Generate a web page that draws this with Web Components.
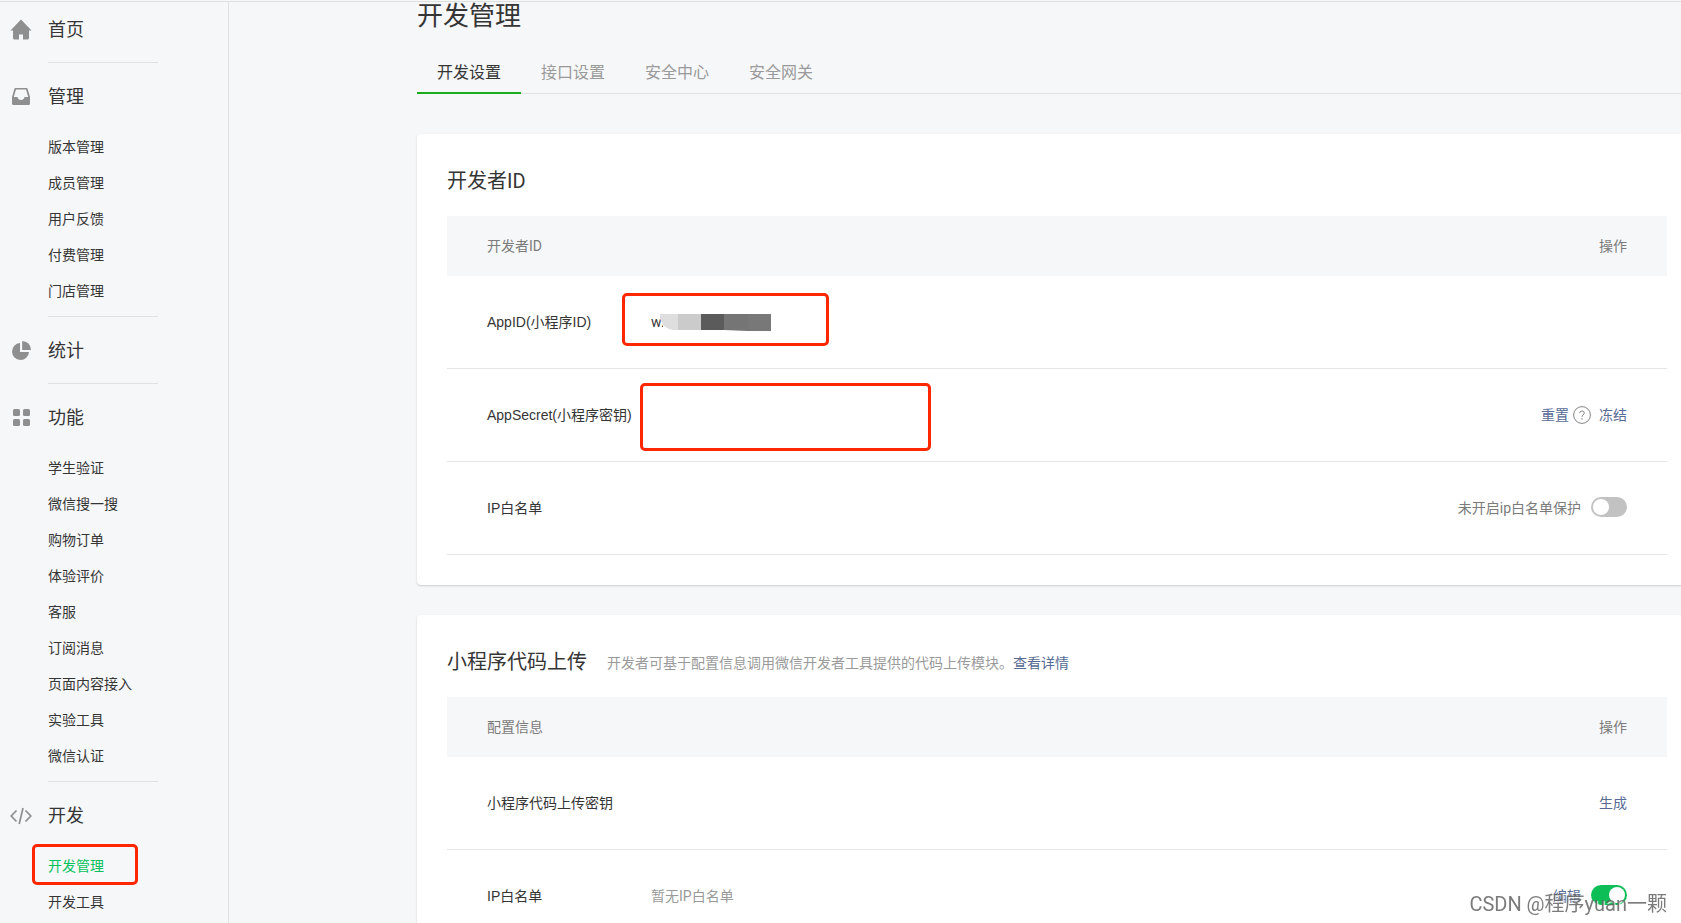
<!DOCTYPE html>
<html lang="zh-CN">
<head>
<meta charset="utf-8">
<title>开发管理</title>
<style>
  body {
    margin: 0;
    background: #f6f7f9;
    color: #353535;
    font: 14px/20px Roboto, "Noto Sans CJK SC", sans-serif;
  }
</style>
</head>
<body>
<app-shell>
  <side-nav slot="nav">
    <nav-group label="首页" icon="home"></nav-group>
    <nav-group label="管理" icon="inbox">
      <nav-item>版本管理</nav-item>
      <nav-item>成员管理</nav-item>
      <nav-item>用户反馈</nav-item>
      <nav-item>付费管理</nav-item>
      <nav-item>门店管理</nav-item>
    </nav-group>
    <nav-group label="统计" icon="pie"></nav-group>
    <nav-group label="功能" icon="grid">
      <nav-item>学生验证</nav-item>
      <nav-item>微信搜一搜</nav-item>
      <nav-item>购物订单</nav-item>
      <nav-item>体验评价</nav-item>
      <nav-item>客服</nav-item>
      <nav-item>订阅消息</nav-item>
      <nav-item>页面内容接入</nav-item>
      <nav-item>实验工具</nav-item>
      <nav-item>微信认证</nav-item>
    </nav-group>
    <nav-group label="开发" icon="code">
      <nav-item current>开发管理</nav-item>
      <nav-item>开发工具</nav-item>
    </nav-group>
  </side-nav>
  <page-header></page-header>
  <settings-card>
    <span slot="title">开发者ID</span>
    <developer-table></developer-table>
  </settings-card>
  <settings-card>
    <span slot="title">小程序代码上传</span>
    <card-note slot="note"></card-note>
    <upload-table></upload-table>
  </settings-card>
</app-shell>
<water-mark>CSDN @程序yuan一颗</water-mark>

<script>
class Base extends HTMLElement {
  connectedCallback() {
    if (this.shadowRoot) return;
    this.attachShadow({ mode: 'open' }).innerHTML = this.render();
  }
}

customElements.define('app-shell', class extends Base {
  render() {
    return `<style>
      :host { display: flex; height: 100vh; box-sizing: border-box; padding-top: 1px; }
      .nav, main { border-top: 1px solid #dcdfde; overflow: auto; scrollbar-width: none; }
      .nav { flex: none; width: 228px; border-right: 1px solid #e0e1e3; }
      main { flex: 1; min-width: 0; padding-left: 188px; }
    </style>
    <div class="nav"><slot name="nav"></slot></div>
    <main><slot></slot></main>`;
  }
});

customElements.define('side-nav', class extends Base {
  render() {
    return `<style>:host { display: block; padding-top: 14px; }</style><nav aria-label="主菜单"><slot></slot></nav>`;
  }
});

const ICONS = {
  home: '<path d="M11 .5 21.500 11.500H19v7.400q0 1.600-1.600 1.600H13v-5H9v5H4.600q-1.600 0-1.600-1.600V11.500H.5Z"/>',
  inbox: '<path fill-rule="evenodd" d="M5.500 2h11q.9 0 1.200.9L20 11v6.500q0 1.500-1.500 1.500h-15Q2 19 2 17.500V11l2.300-8.100q.3-.9 1.200-.9ZM6 3.600 3.800 11H7.500q.6 3 3.500 3t3.500-3h3.700L16 3.600Z"/>',
  pie: '<path d="M10 3v9h9a8.500 8.500 0 1 1-9-9Z"/><path d="M12.200 1a8.800 8.800 0 0 1 8.800 8.900h-8.800Z"/>',
  grid: '<rect x="3" y="2" width="7" height="7" rx="1.500"/><rect x="13" y="2" width="7" height="7" rx="1.500"/><rect x="3" y="12" width="7" height="7" rx="1.500"/><rect x="13" y="12" width="7" height="7" rx="1.500"/>',
  code: '<path fill="none" stroke="#8f8f8f" stroke-width="1.700" d="M6.500 5.500 1.200 11l5.300 5.500M15.500 5.500l5.300 5.500-5.300 5.500M13 3 9.200 19"/>'
};

customElements.define('nav-group', class extends Base {
  render() {
    return `<style>
      :host { display: block; }
      :host(:not(:first-child))::before {
        content: ""; display: block; width: 110px; height: 1px; margin: 0 0 20px 48px; background: #e0e1e3;
      }
      a { display: flex; align-items: center; height: 28px; padding: 0 10px 18px; gap: 16px;
          font-size: 18px; line-height: 28px; color: inherit; text-decoration: none; }
      svg { width: 22px; height: 22px; fill: #8f8f8f; }
      .items.filled { padding-bottom: 7px; }
    </style>
    <a href="#"><svg viewBox="0 0 22 22" aria-hidden="true">${ICONS[this.getAttribute('icon')]}</svg>${this.getAttribute('label')}</a>
    <div class="items ${this.children.length ? 'filled' : ''}"><slot></slot></div>`;
  }
});

customElements.define('nav-item', class extends Base {
  render() {
    return `<style>
      :host { display: block; position: relative; padding-left: 48px; }
      a { display: inline-block; line-height: 36px; color: inherit; text-decoration: none; }
      :host([current]) a { color: #07c160; }
      red-frame { left: 32px; top: -4px; width: 106px; height: 41px; }
    </style>
    <a href="#"><slot></slot></a>${this.hasAttribute('current') ? '<red-frame></red-frame>' : ''}`;
  }
});

customElements.define('red-frame', class extends Base {
  render() {
    return `<style>:host { position: absolute; box-sizing: border-box; border: 3px solid #ff2600; border-radius: 5px; pointer-events: none; }</style>`;
  }
});

customElements.define('page-header', class extends Base {
  render() {
    return `<style>
      :host { display: block; margin-bottom: 40px; }
      h1 { margin: 0 0 20px; font-size: 26px; line-height: 28px; font-weight: 400; }
      nav { display: flex; box-shadow: inset 0 -1px #e0e1e3; }
      a { padding: 2px 20px 0; font-size: 16px; line-height: 42px; color: #9a9a9a; text-decoration: none; }
      a[aria-current] { color: #353535; box-shadow: inset 0 -2px #1aad19; }
    </style>
    <h1>开发管理</h1>
    <nav aria-label="开发管理">
      <a href="#" aria-current="page">开发设置</a><a href="#">接口设置</a><a href="#">安全中心</a><a href="#">安全网关</a>
    </nav>`;
  }
});

customElements.define('settings-card', class extends Base {
  render() {
    return `<style>
      :host { display: block; margin-bottom: 30px; padding: 32px 14px 30px 30px; background: #fff;
              border-radius: 4px 0 0 4px; box-shadow: 0 1px 2px rgba(0,0,0,.18); }
      header { display: flex; align-items: center; gap: 20px; margin-bottom: 20px; }
      h2 { margin: 0; font-size: 20px; line-height: 30px; font-weight: 400; }
    </style>
    <header><h2><slot name="title"></slot></h2><slot name="note"></slot></header>
    <slot></slot>`;
  }
});

customElements.define('card-note', class extends Base {
  render() {
    return `<style>
      :host { display: block; padding-top: 2px; color: #9a9a9a; }
      a { color: #576b95; text-decoration: none; }
    </style>开发者可基于配置信息调用微信开发者工具提供的代码上传模块。<a href="#">查看详情</a>`;
  }
});

customElements.define('toggle-switch', class extends Base {
  render() {
    return `<style>
      :host { display: block; height: 20px; margin-bottom: 2px; }
      input { appearance: none; display: block; box-sizing: border-box; width: 36px; height: 20px; margin: 0;
              padding: 2px; border-radius: 10px; background: #c2c2c2; }
      input::before { content: ""; display: block; width: 16px; height: 16px; border-radius: 50%; background: #fff; }
      input:checked { background: #0dbd56; }
      input:checked::before { margin-left: 16px; }
    </style><input type="checkbox" role="switch" aria-label="IP白名单" ${this.hasAttribute('on') ? 'checked' : ''}>`;
  }
});

customElements.define('masked-value', class extends Base {
  render() {
    return `<style>
      :host { display: flex; position: relative; align-items: center; height: 20px; }
      svg { position: absolute; left: 9px; top: 2px; width: 111px; height: 17px; }
    </style>wx<svg viewBox="0 0 111 17" aria-hidden="true">
      <path fill="#dedede" d="M0 0h18v16h-5Q4 15 0 5Z"/>
      <path fill="#fff" d="M3 10q3 6 10 6v1H3Z"/>
      <path fill="#cbcbcb" d="M18 0h23v16H18Z"/><path fill="#5b5b5b" d="M41 0h23v16H41Z"/>
      <path fill="#757575" d="M64 0h24v17L64 16Z"/><path fill="#787878" d="M88 0h23v17H88Z"/></svg>`;
  }
});

class ConfigTable extends Base {
  render() {
    return `<style>
      :host { display: block; }
      table { width: 100%; table-layout: fixed; border-collapse: separate; border-spacing: 0; }
      th, td { position: relative; box-sizing: border-box; padding: 0; font-weight: 400; text-align: left; white-space: nowrap; }
      thead th { height: 60px; background: #f6f7f9; color: #7b7b7b; }
      tbody th, td { height: 93px; border-bottom: 1px solid #e4e5e6; }
      tbody th { font-family: "Liberation Sans", "Noto Sans CJK SC", sans-serif; }
      tr > :first-child { width: 204px; padding-left: 40px; }
      tr > :last-child { width: 300px; padding-right: 40px; text-align: right; }
      a { color: #576b95; text-decoration: none; }
      .actions { display: flex; align-items: center; justify-content: flex-end; color: #7b7b7b; }
      .wide { gap: 10px; }
      .help { display: block; width: 18px; height: 18px; margin: 0 8px 0 4px; padding: 0; border: 0; background: none; }
      .muted { color: #9a9a9a; }
      .id-frame { left: -29px; top: 17px; width: 207px; height: 53px; }
      .secret-frame { left: -11px; top: 14px; width: 291px; height: 68px; }
    </style>
    <table>
      <thead><tr><th scope="col">${this.heading}</th><th></th><th scope="col">操作</th></tr></thead>
      <tbody>${this.rows.map(([name, value, actions]) =>
        `<tr><th scope="row">${name}</th><td>${value}</td><td>${actions}</td></tr>`).join('')}</tbody>
    </table>`;
  }
}

customElements.define('developer-table', class extends ConfigTable {
  heading = '开发者ID';
  rows = [
    ['AppID(小程序ID)', '<masked-value></masked-value><red-frame class="id-frame"></red-frame>', ''],
    ['AppSecret(小程序密钥)', '<red-frame class="secret-frame"></red-frame>',
      `<div class="actions"><a href="#">重置</a><button class="help" aria-label="帮助"><svg width="18" height="18" viewBox="0 0 18 18" fill="none" stroke="#858585"><circle cx="9" cy="9" r="8.400"/><path d="M6.700 7.200Q6.800 4.900 9 4.900t2.300 2.100q0 1.100-1.200 1.900T9 10.900"/><path d="M9 12.200v1.300" stroke-width="1.300"/></svg></button><a href="#">冻结</a></div>`],
    ['IP白名单', '', '<div class="actions wide">未开启ip白名单保护<toggle-switch></toggle-switch></div>']
  ];
});

customElements.define('upload-table', class extends ConfigTable {
  heading = '配置信息';
  rows = [
    ['小程序代码上传密钥', '', '<a href="#">生成</a>'],
    ['IP白名单', '<span class="muted">暂无IP白名单</span>',
      '<div class="actions wide"><a href="#">编辑</a><toggle-switch on></toggle-switch></div>']
  ];
});

customElements.define('water-mark', class extends Base {
  render() {
    return `<style>
      :host { position: fixed; right: 14px; bottom: 5px; font-size: 20px; line-height: 28px; color: rgba(90,90,90,.8);
              text-shadow: 1px 1px 1px rgba(255,255,255,.9); white-space: nowrap; pointer-events: none; }
    </style><slot></slot>`;
  }
});
</script>
</body>
</html>
